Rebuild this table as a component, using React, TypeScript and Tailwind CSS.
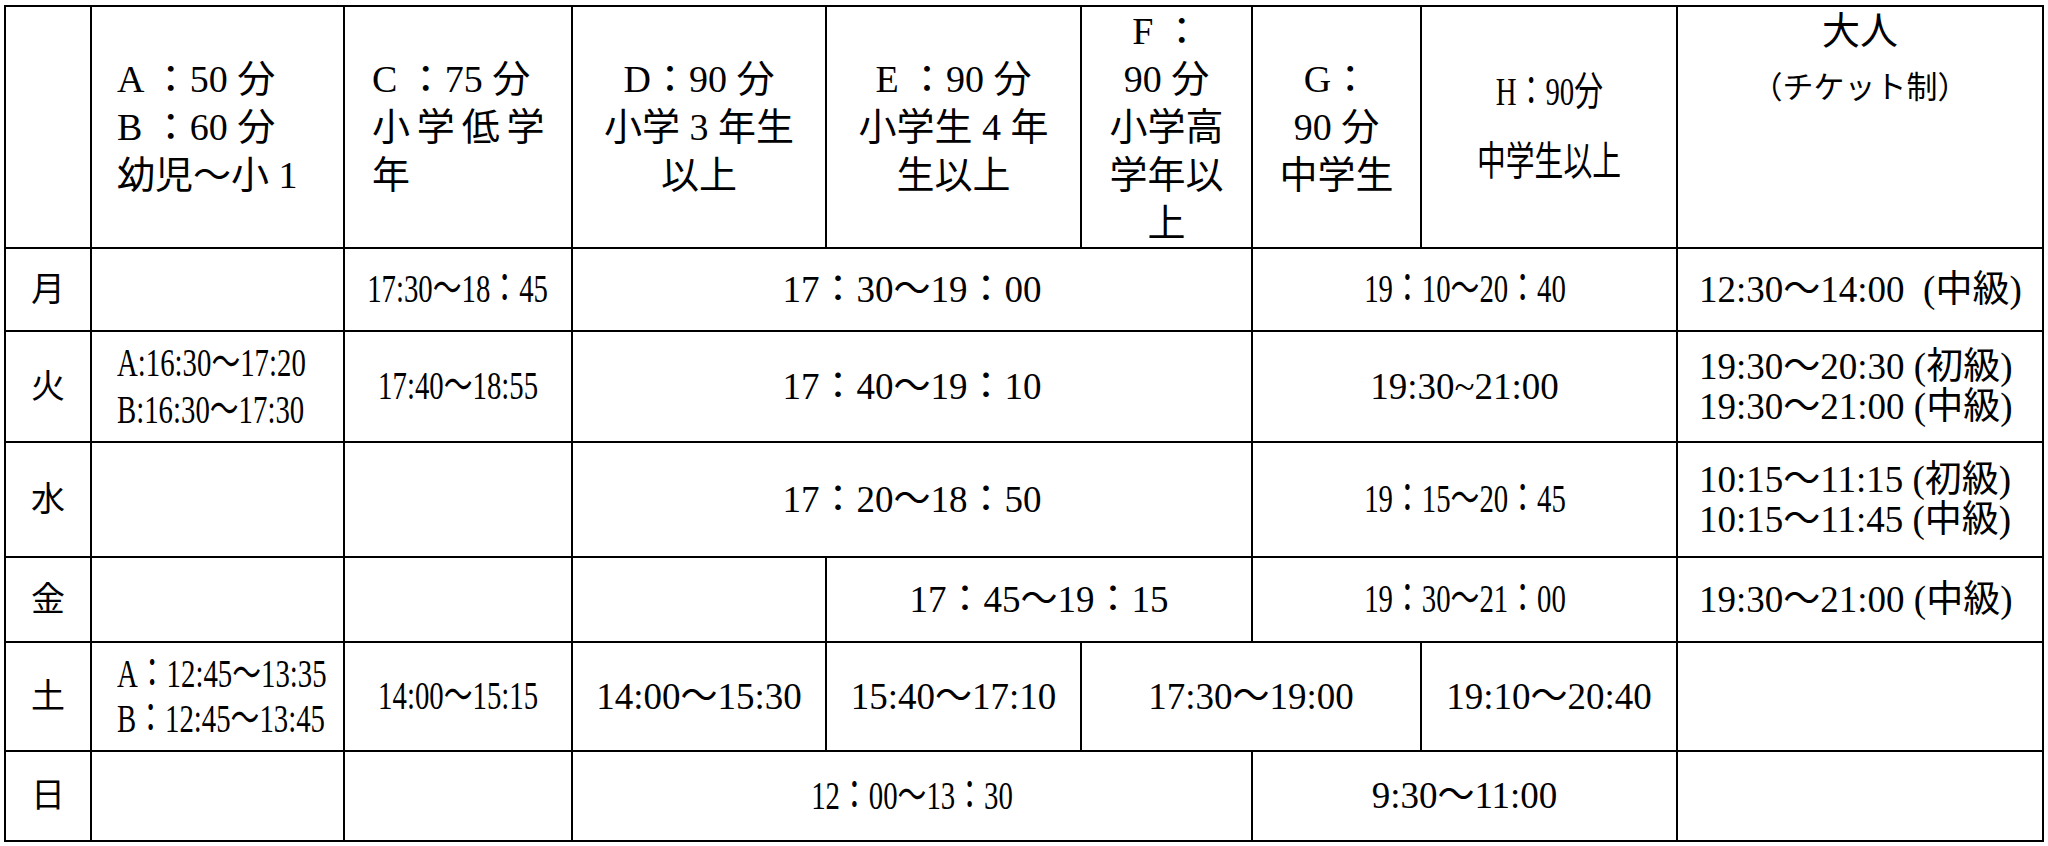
import React from "react";

const td = "border-2 border-black p-0 align-middle text-center";

function Narrow({ children, left }: { children: React.ReactNode; left?: boolean }) {
  return (
    <span
      className={`inline-block whitespace-nowrap text-[40px] [transform:scaleX(0.72)] ${
        left ? "origin-left" : "origin-center -mx-[40px]"
      }`}
    >
      {children}
    </span>
  );
}

function Day({ d }: { d: string }) {
  return <td className={`${td} text-[34px]`}>{d}</td>;
}

export default function App() {
  return (
    <div className="min-h-screen bg-white pl-[4px] pt-[5px] text-black font-['Liberation_Serif','Noto_Sans_CJK_JP',serif]">
      <table className="table-fixed border-collapse w-[2039px] text-[37px] leading-[40px]">
        <colgroup>
          <col className="w-[86px]" />
          <col className="w-[253px]" />
          <col className="w-[228px]" />
          <col className="w-[254px]" />
          <col className="w-[255px]" />
          <col className="w-[171px]" />
          <col className="w-[169px]" />
          <col className="w-[256px]" />
          <col className="w-[366px]" />
        </colgroup>
        <tbody>
          {/* header */}
          <tr className="h-[242px] text-[38px] leading-[48px]">
            <td className={td}></td>
            <td className={`${td} text-left pl-[25px]`}>
              A ：50 分<br />B ：60 分<br />幼児〜小 1
            </td>
            <td className={`${td} text-left pl-[27px]`}>
              C ：75 分<br />
              <span className="tracking-[0.18em]">小学低学</span>
              <br />年
            </td>
            <td className={td}>
              D：90 分<br />小学 3 年生<br />以上
            </td>
            <td className={td}>
              E ：90 分<br />小学生 4 年<br />生以上
            </td>
            <td className={td}>
              F ：<br />90 分<br />小学高<br />学年以<br />上
            </td>
            <td className={td}>
              G：<br />90 分<br />中学生
            </td>
            <td className={td}>
              <div className="flex flex-col items-center gap-[22px]">
                <Narrow>H：90分</Narrow>
                <Narrow>中学生以上</Narrow>
              </div>
            </td>
            <td className={`${td} align-top`}>
              <div className="leading-[48px]">大人</div>
              <div className="mt-[14px] text-[31px] leading-[38px]">（チケット制）</div>
            </td>
          </tr>

          {/* 月 */}
          <tr className="h-[83px]">
            <Day d="月" />
            <td className={td}></td>
            <td className={td}>
              <Narrow>17:30〜18：45</Narrow>
            </td>
            <td className={td} colSpan={3}>
              17：30〜19：00
            </td>
            <td className={td} colSpan={2}>
              <Narrow>19：10〜20：40</Narrow>
            </td>
            <td className={`${td} text-left pl-[21px]`}>12:30〜14:00 &nbsp;(中級)</td>
          </tr>

          {/* 火 */}
          <tr className="h-[111px]">
            <Day d="火" />
            <td className={`${td} text-left pl-[25px] leading-[46px]`}>
              <Narrow left>A:16:30〜17:20</Narrow>
              <br />
              <Narrow left>B:16:30〜17:30</Narrow>
            </td>
            <td className={td}>
              <Narrow>17:40〜18:55</Narrow>
            </td>
            <td className={td} colSpan={3}>
              17：40〜19：10
            </td>
            <td className={td} colSpan={2}>
              19:30~21:00
            </td>
            <td className={`${td} text-left pl-[21px] leading-[40px]`}>
              19:30〜20:30 (初級)
              <br />
              19:30〜21:00 (中級)
            </td>
          </tr>

          {/* 水 */}
          <tr className="h-[115px]">
            <Day d="水" />
            <td className={td}></td>
            <td className={td}></td>
            <td className={td} colSpan={3}>
              17：20〜18：50
            </td>
            <td className={td} colSpan={2}>
              <Narrow>19：15〜20：45</Narrow>
            </td>
            <td className={`${td} text-left pl-[21px] leading-[40px]`}>
              10:15〜11:15 (初級)
              <br />
              10:15〜11:45 (中級)
            </td>
          </tr>

          {/* 金 */}
          <tr className="h-[85px]">
            <Day d="金" />
            <td className={td}></td>
            <td className={td}></td>
            <td className={td}></td>
            <td className={td} colSpan={2}>
              17：45〜19：15
            </td>
            <td className={td} colSpan={2}>
              <Narrow>19：30〜21：00</Narrow>
            </td>
            <td className={`${td} text-left pl-[21px]`}>19:30〜21:00 (中級)</td>
          </tr>

          {/* 土 */}
          <tr className="h-[109px]">
            <Day d="土" />
            <td className={`${td} text-left pl-[25px] leading-[44px]`}>
              <Narrow left>A：12:45〜13:35</Narrow>
              <br />
              <Narrow left>B：12:45〜13:45</Narrow>
            </td>
            <td className={td}>
              <Narrow>14:00〜15:15</Narrow>
            </td>
            <td className={td}>14:00〜15:30</td>
            <td className={td}>15:40〜17:10</td>
            <td className={td} colSpan={2}>
              17:30〜19:00
            </td>
            <td className={td}>19:10〜20:40</td>
            <td className={td}></td>
          </tr>

          {/* 日 */}
          <tr className="h-[90px]">
            <Day d="日" />
            <td className={td}></td>
            <td className={td}></td>
            <td className={td} colSpan={3}>
              <Narrow>12：00〜13：30</Narrow>
            </td>
            <td className={td} colSpan={2}>
              9:30〜11:00
            </td>
            <td className={td}></td>
          </tr>
        </tbody>
      </table>
    </div>
  );
}
